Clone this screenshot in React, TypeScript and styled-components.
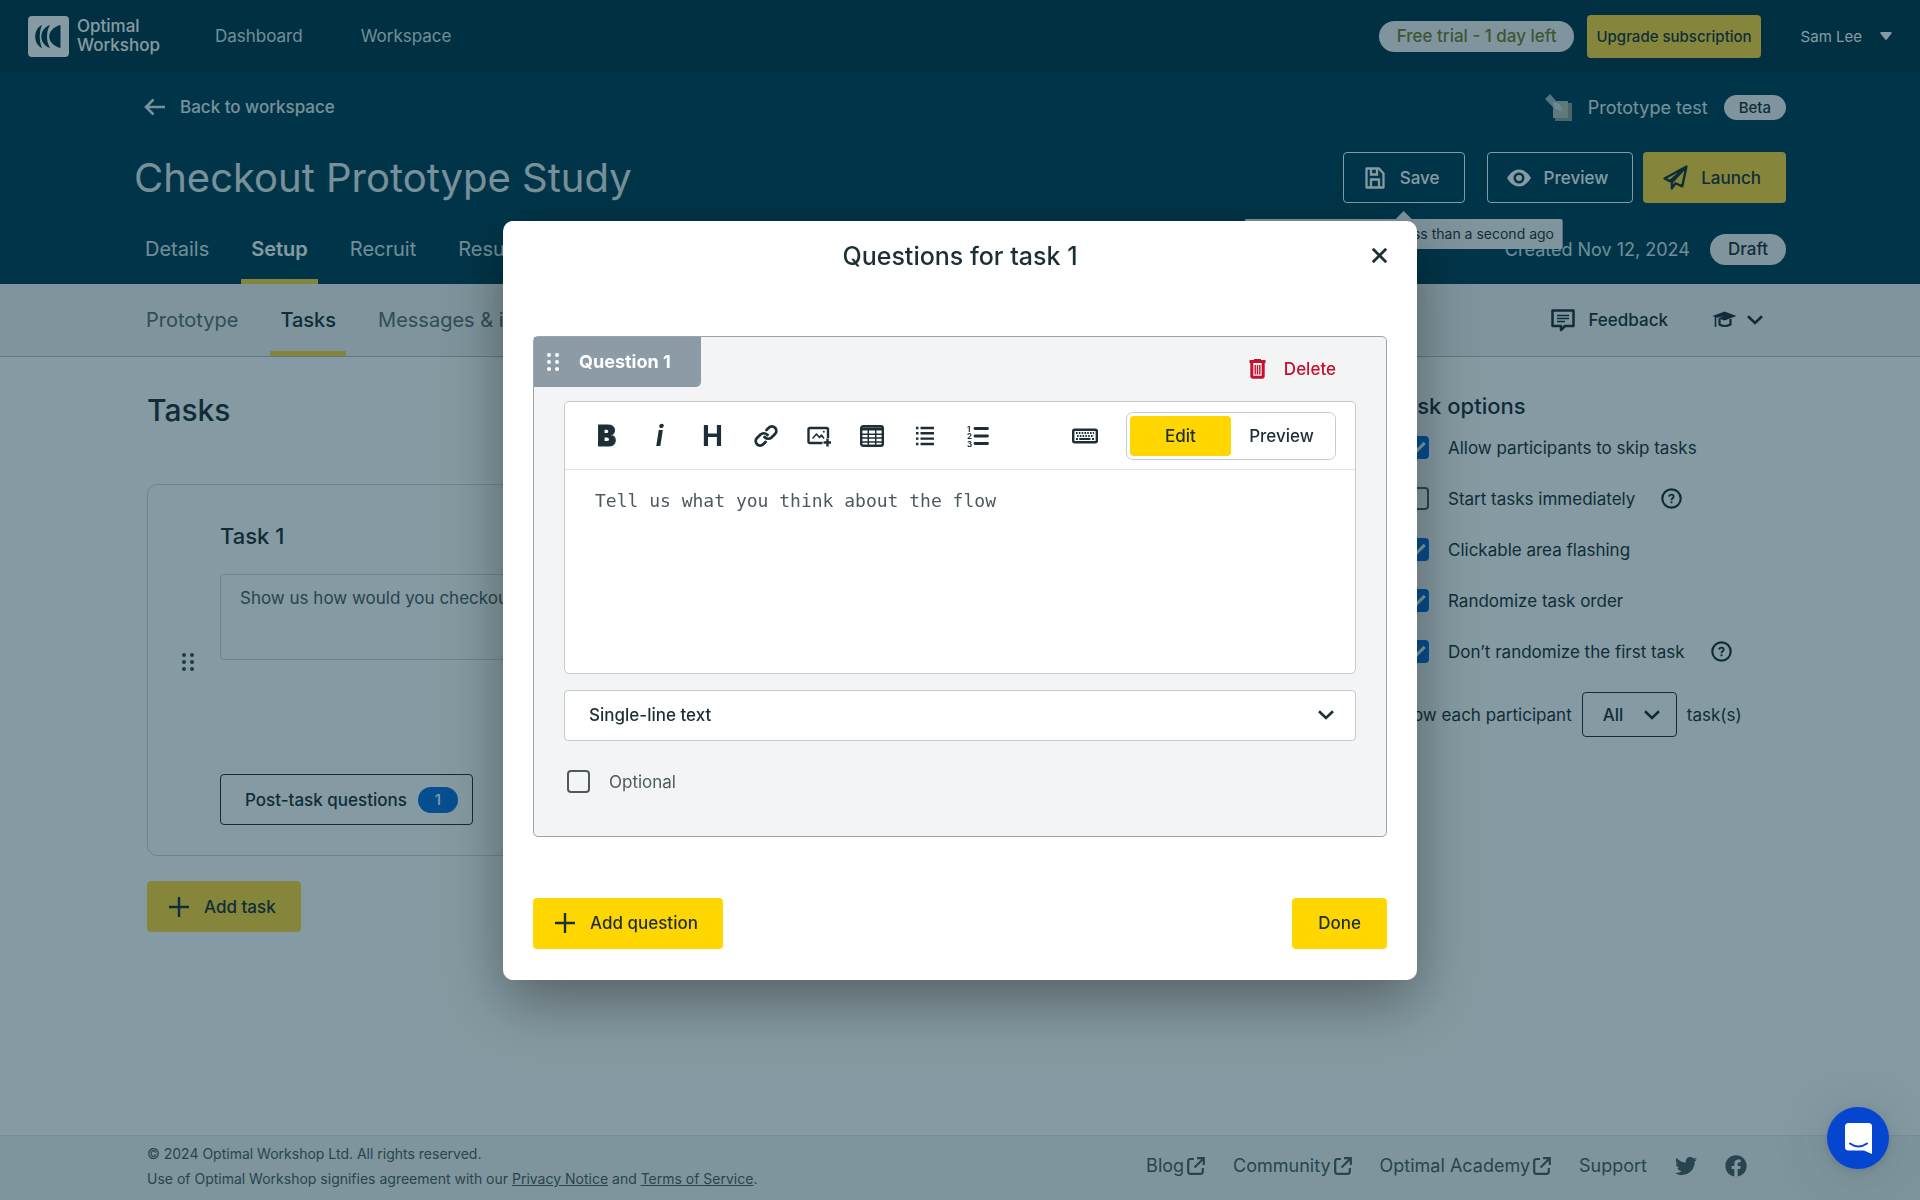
import React, { useState } from "react";
import styled, { createGlobalStyle, css } from "styled-components";
import { FaTwitter, FaFacebook } from "react-icons/fa";

const color = {
  ink: "#1c2f36",
  inkSoft: "#4c5a60",
  navy: "#003e55",
  navyDark: "#003447",
  yellow: "#ffd600",
  yellowSoft: "#ffd83c",
  blue: "#0a70dc",
  line: "#d3d8db",
  surface: "#f3f4f6",
  red: "#c8102e",
};

const GlobalStyle = createGlobalStyle`
  *, *::before, *::after { box-sizing: border-box; }
  body { margin: 0; }
  body, button, input, select, textarea {
    font-family: Inter, "Liberation Sans", sans-serif;
    font-size: 17px;
    color: ${color.ink};
  }
  button { cursor: pointer; }
  h1, h2, h3, p { margin: 0; }
`;

/* ---------- Icons ---------- */

const strokeIcon = (size: number, width = 2) => ({
  width: size,
  height: size,
  viewBox: "0 0 24 24",
  fill: "none",
  stroke: "currentColor",
  strokeWidth: width,
  "aria-hidden": true,
});

const LogoMark = () => (
  <svg width="41" height="41" viewBox="0 0 41 41" aria-hidden="true">
    <rect width="41" height="41" rx="4" fill="#fff" />
    <path d="M14 9C5 13 5 28 14 32C11 26 11 15 14 9Z" fill={color.navyDark} />
    <path d="M22 9C10.500 13 10.500 28 22 32C18 26 18 15 22 9Z" fill={color.navyDark} />
    <path d="M32.500 9V32C17.500 28 17.500 13 32.500 9Z" fill={color.navyDark} />
  </svg>
);

const ArrowLeft = () => (
  <svg {...strokeIcon(24, 2.6)}><path d="M22 12H3M10.500 4.500L3 12L10.500 19.500" /></svg>
);

const CaretDown = () => (
  <svg width="12" height="8" viewBox="0 0 12 8" fill="#fff" aria-hidden="true">
    <path d="M1.500 0H10.500Q12.500 0 11.500 1.500L7 7.200Q6 8.200 5 7.200L0.500 1.500Q-0.500 0 1.500 0Z" />
  </svg>
);

const Chevron = () => (
  <svg width="16" height="10" viewBox="0 0 16 10" fill="none" stroke="currentColor" strokeWidth="2.600" aria-hidden="true">
    <path d="M1 1.200L8 8L15 1.200" />
  </svg>
);

const PrototypeIcon = () => (
  <svg width="27" height="27" viewBox="0 0 27 27" aria-hidden="true">
    <path d="M11 9H27V27H10V12Z" fill="#8f9a9c" />
    <path d="M8 7H23V24H8Z" fill="#b4beb6" />
    <path d="M5 0L12 8Q17 11 16 16Q10 18 7 12L0 5Z" fill="#a3b6c2" />
    <path d="M9 8Q17 9 17 17Q9 17 8 10Z" fill="#d5dfe2" />
  </svg>
);

const SaveIcon = () => (
  <svg {...strokeIcon(24, 2.3)}>
    <path d="M3.500 2.500H16L20.500 7.500V21.500H3.500Z" strokeLinejoin="round" />
    <path d="M8 2.500V8.500H14V2.500M8 21.500V13.500H16V21.500" />
  </svg>
);

const EyeIcon = () => (
  <svg width="24" height="24" viewBox="0 0 24 24" fill="currentColor" fillRule="evenodd" aria-hidden="true">
    <path d="M12 3.500Q19 3.500 24 12Q19 20.500 12 20.500Q5 20.500 0 12Q5 3.500 12 3.500ZM12 6.500A5.500 5.500 0 1 0 12 17.500A5.500 5.500 0 1 0 12 6.500ZM12 9A3 3 0 1 1 12 15A3 3 0 1 1 12 9Z" />
  </svg>
);

const PlaneIcon = () => (
  <svg {...strokeIcon(25, 2.3)} strokeLinejoin="round">
    <path d="M22.500 1.500L1.500 13L6.500 15.500L22.500 1.500L18.500 20.500L12 17.500L8.500 22.500V16.500L22.500 1.500" />
  </svg>
);

const PlusIcon = () => (
  <svg {...strokeIcon(24, 2.4)}><path d="M12 2V22M2 12H22" /></svg>
);

const FeedbackIcon = () => (
  <svg {...strokeIcon(24, 2)} strokeLinejoin="round">
    <path d="M1.500 2.500H22.500V18H14L10 22V18H1.500Z" strokeWidth="2.500" />
    <path d="M6 7.500H18M6 10.500H18M6 13.500H14" strokeWidth="1.400" />
  </svg>
);

const GraduationIcon = () => (
  <svg width="25" height="24" viewBox="0 0 25 24" aria-hidden="true">
    <path d="M0.500 8L12.500 3.500L24.500 8L12.500 12.500L6 10.200L12.500 8L4.800 9.700Z" fill="currentColor" />
    <path d="M3.500 9V19" stroke="currentColor" strokeWidth="1.600" />
    <path d="M7.500 11V16.500Q12.500 19.500 18.500 16.500V11" fill="none" stroke="currentColor" strokeWidth="2.200" />
  </svg>
);

const GripIcon = () => (
  <svg width="12" height="18" viewBox="0 0 12 18" fill="currentColor" aria-hidden="true">
    {[2, 9, 16].map((y) => (
      <g key={y}><circle cx="2" cy={y} r="2" /><circle cx="10" cy={y} r="2" /></g>
    ))}
  </svg>
);

const HelpIcon = () => (
  <svg width="21" height="21" viewBox="0 0 21 21" fill="none" stroke="currentColor" aria-hidden="true">
    <circle cx="10.500" cy="10.500" r="9.200" strokeWidth="2.200" />
    <path d="M8.200 8.600Q8.300 6.600 10.500 6.600Q12.700 6.600 12.700 8.500Q12.700 9.700 11.400 10.400Q10.500 11 10.500 12.200" strokeWidth="1.800" />
    <circle cx="10.500" cy="14.300" r="1.100" fill="currentColor" stroke="none" />
  </svg>
);

const ExternalIcon = () => (
  <svg width="18" height="18" viewBox="0 0 18 18" fill="none" stroke="currentColor" strokeWidth="2.200" aria-hidden="true">
    <path d="M7 2H3.500Q1.200 2 1.200 4.200V14.500Q1.200 16.800 3.500 16.800H13.500Q15.800 16.800 15.800 14.500V11" />
    <path d="M10 1.200H16.800V8M16.500 1.500L7.500 10.500" />
  </svg>
);

const CloseIcon = () => (
  <svg width="15" height="15" viewBox="0 0 15 15" fill="none" stroke="currentColor" strokeWidth="2.800" aria-hidden="true">
    <path d="M0.800 0.800L14.200 14.200M14.200 0.800L0.800 14.200" />
  </svg>
);

const TrashIcon = () => (
  <svg width="17" height="20" viewBox="0 0 17 20" fill="none" stroke="currentColor" aria-hidden="true">
    <path d="M0.500 2.500H16.500M5 1.500H12" strokeWidth="2.800" />
    <path d="M2.800 3V17Q2.800 18.300 4 18.300H13Q14.200 18.300 14.200 17V3" strokeWidth="3" />
    <path d="M6.200 6V15.500M8.500 6V15.500M10.800 6V15.500" strokeWidth="1.400" />
  </svg>
);

const LinkIcon = () => (
  <svg {...strokeIcon(24, 2.8)} strokeLinecap="round">
    <path d="M10.500 13a5 5 0 0 0 7 .5l3.500-3.500a4.300 4.300 0 0 0-6.200-6.200L12.500 6" />
    <path d="M13.500 11a5 5 0 0 0-7-.5L3 14a4.300 4.300 0 0 0 6.200 6.200L11.500 18" />
  </svg>
);

const ImageIcon = () => (
  <svg {...strokeIcon(24, 2.4)} strokeLinejoin="round">
    <path d="M15.500 19H3Q1.500 19 1.500 17.500V5.500Q1.500 4 3 4H19.500Q21 4 21 5.500V14" />
    <path d="M5.500 14.500L9.500 10L12.500 13.500L14.500 11L17 14.500" strokeWidth="1.500" />
    <circle cx="16.800" cy="7.800" r="1" fill="currentColor" stroke="none" />
    <path d="M20.500 14.500V22.500M16.500 18.500H24.500" />
  </svg>
);

const TableIcon = () => (
  <svg width="24" height="22" viewBox="0 0 24 22" fill="none" stroke="currentColor" aria-hidden="true">
    <rect x="1.200" y="1.200" width="21.600" height="19.600" rx="2" strokeWidth="2.400" />
    <path d="M1 4H23" strokeWidth="3" />
    <path d="M8.300 3V20M15.700 3V20M1 9.300H23M1 13H23M1 17H23" strokeWidth="1.500" />
  </svg>
);

const BulletListIcon = () => (
  <svg width="18" height="20" viewBox="0 0 18 20" stroke="currentColor" strokeWidth="2.400" aria-hidden="true">
    {[2, 7.3, 12.600, 18].map((y) => (
      <path key={y} d={`M0 ${y}H2.500M4.500 ${y}H18`} />
    ))}
  </svg>
);

const NumberListIcon = () => (
  <svg width="22" height="24" viewBox="0 0 22 24" aria-hidden="true">
    <path d="M8 4.500H20.500M8 12H20.500M8 19.500H20.500" stroke="currentColor" strokeWidth="2.800" strokeLinecap="round" />
    {[1, 2, 3].map((n) => (
      <text key={n} x="0" y={7.500 * n} fontSize="8" fontWeight="700" fill="currentColor">{n}</text>
    ))}
  </svg>
);

const KeyboardIcon = () => (
  <svg width="26" height="16" viewBox="0 0 26 16" fill="none" stroke="currentColor" aria-hidden="true">
    <rect x="1.200" y="1.700" width="23.600" height="12.600" rx="1.500" strokeWidth="2.400" />
    <path d="M4 5H22M5 8H22" strokeWidth="1.800" strokeDasharray="1.600 1.200" />
    <path d="M4 11H6M7.200 11H18.500M20 11H22" strokeWidth="1.800" />
  </svg>
);

const ChatIcon = () => (
  <svg width="27" height="31" viewBox="0 0 27 31" aria-hidden="true">
    <path d="M3.500 0H23.500Q27 0 27 3.500V31L19 27.500H3.500Q0 27.500 0 24V3.500Q0 0 3.500 0Z" fill="#fff" />
    <path d="M5 20.500Q13.500 26.500 22 20.500" fill="none" stroke="#0546d0" strokeWidth="2" strokeLinecap="round" />
  </svg>
);

/* ---------- Shared controls ---------- */

const Button = styled.button<{ $kind?: "primary" | "soft" | "light" | "dark" }>`
  display: inline-flex;
  align-items: center;
  gap: 13px;
  height: 51px;
  padding: 0 24px 0 19px;
  border: 1px solid transparent;
  border-radius: 4px;
  background: none;
  font-weight: 500;
  white-space: nowrap;
  ${({ $kind }) => $kind === "primary" && css`background: ${color.yellow};`}
  ${({ $kind }) => $kind === "soft" && css`background: ${color.yellowSoft};`}
  ${({ $kind }) => $kind === "light" && css`border-color: #fff; color: #fff;`}
  ${({ $kind }) => $kind === "dark" && css`border-color: ${color.ink}; padding: 0 14px 0 24px; gap: 11px;`}
`;

const PlainButton = styled.button<{ $gap?: number }>`
  display: inline-flex;
  align-items: center;
  gap: ${({ $gap = 0 }) => $gap}px;
  padding: 0;
  border: 0;
  background: none;
  color: inherit;
  font-weight: 500;
`;

const Pill = styled.span<{ $small?: boolean }>`
  display: inline-flex;
  align-items: center;
  height: ${({ $small }) => ($small ? 25 : 31)}px;
  padding: 0 ${({ $small }) => ($small ? 15 : 18)}px;
  border-radius: 16px;
  background: ${color.surface};
  color: ${color.ink};
  font-size: ${({ $small }) => ($small ? 15 : 17)}px;
  font-weight: 500;
`;

const TrialPill = styled(Pill)`
  color: #7b7c2c;
`;

const Checkbox = styled.input.attrs({ type: "checkbox" })`
  appearance: none;
  display: grid;
  place-items: center;
  flex: none;
  width: 23px;
  height: 23px;
  margin: 0;
  border: 2px solid ${color.inkSoft};
  border-radius: 4px;
  &:checked {
    border-color: ${color.blue};
    background: ${color.blue};
  }
  &:checked::after {
    content: "";
    width: 14px;
    height: 8px;
    margin-bottom: 4px;
    border: solid #fff;
    border-width: 0 0 3px 3px;
    transform: rotate(-45deg);
  }
`;

const SelectBox = styled.span<{ $strong?: boolean }>`
  position: relative;
  display: flex;
  select {
    appearance: none;
    width: 100%;
    height: ${({ $strong }) => ($strong ? 45 : 51)}px;
    padding: 0 ${({ $strong }) => ($strong ? "52px 0 20px" : "60px 0 24px")};
    border: 1px solid ${({ $strong }) => ($strong ? color.ink : "#c5cbcf")};
    border-radius: 4px;
    background: ${({ $strong }) => ($strong ? "transparent" : "#fff")};
    font-weight: 500;
  }
  svg {
    position: absolute;
    top: 0;
    bottom: 0;
    right: ${({ $strong }) => ($strong ? 17 : 22)}px;
    margin: auto;
    pointer-events: none;
  }
`;

/* ---------- Page ---------- */

const Page = styled.div`
  display: flex;
  flex-direction: column;
  min-height: 100vh;
  background: #fff;
`;

const TopBar = styled.div`
  display: flex;
  align-items: center;
  height: 72px;
  padding: 0 28px;
  background: ${color.navyDark};
  color: #fff;
`;

const Brand = styled.a`
  display: flex;
  align-items: center;
  gap: 8px;
  margin-right: 55px;
  color: #fff;
  font-weight: 500;
  line-height: 19px;
  text-decoration: none;
`;

const MainNav = styled.nav`
  display: flex;
  gap: 58px;
  flex: 1;
  a {
    color: #dde4e8;
    text-decoration: none;
  }
`;

const UpgradeButton = styled(Button)`
  height: 43px;
  margin: 0 40px 0 13px;
  padding: 0 8px;
  font-size: 15px;
`;

const UserMenu = styled(PlainButton)`
  font-size: 15px;
  font-weight: 400;
`;

const Header = styled.header`
  padding: 20px 134px 0;
  background: ${color.navy};
  color: #fff;
`;

const Row = styled.div<{ $gap?: number }>`
  display: flex;
  align-items: center;
  gap: ${({ $gap = 0 }) => $gap}px;
`;

const BackRow = styled(Row)`
  justify-content: space-between;
  height: 30px;
  padding-left: 9px;
  margin-bottom: 30px;
  color: #e6ebee;
`;

const BackLink = styled.a`
  display: flex;
  align-items: center;
  gap: 13px;
  color: inherit;
  font-weight: 500;
  text-decoration: none;
`;

const TestType = styled.span`
  font-size: 18px;
`;

const TitleRow = styled(Row)`
  justify-content: space-between;
  margin-bottom: 11px;
`;

const StudyTitle = styled.h1`
  font-size: 40px;
  font-weight: 400;
  line-height: 50px;
  color: #e6ebee;
`;

const SaveWrap = styled.div`
  position: relative;
  margin-right: 12px;
`;

const Tooltip = styled.div`
  position: absolute;
  z-index: 1;
  top: 67px;
  left: 50%;
  transform: translateX(-50%);
  padding: 0 9px;
  border-radius: 2px;
  background: ${color.surface};
  color: ${color.ink};
  font-size: 14px;
  line-height: 30px;
  white-space: nowrap;
  &::before {
    content: "";
    position: absolute;
    top: -8px;
    left: 50%;
    margin-left: -9px;
    border: solid transparent;
    border-width: 0 9px 9px;
    border-bottom-color: ${color.surface};
  }
`;

const TabRow = styled(Row)`
  justify-content: space-between;
  height: 70px;
  padding-left: 1px;
`;

const Tabs = styled.nav`
  display: flex;
  align-self: stretch;
  gap: 22px;
`;

const Tab = styled.a<{ $active?: boolean; $dark?: boolean }>`
  display: flex;
  align-items: center;
  padding: 5px 10px 0;
  border-bottom: 5px solid ${({ $active }) => ($active ? color.yellowSoft : "transparent")};
  color: ${({ $active, $dark }) => ($dark ? ($active ? color.ink : "#5c6b73") : $active ? "#fff" : "#dde4e8")};
  font-size: 20px;
  font-weight: ${({ $active, $dark }) => ($active ? ($dark ? 500 : 600) : 400)};
  text-decoration: none;
`;

const Muted = styled.span`
  font-size: 18px;
  color: #dde4e8;
`;

const SubNav = styled.div`
  display: flex;
  align-items: center;
  justify-content: space-between;
  height: 73px;
  padding: 0 157px 0 136px;
  border-bottom: 1px solid #b9c0c5;
  background: ${color.surface};
`;

const Main = styled.main`
  display: grid;
  grid-template-columns: minmax(0, 1fr) 394px;
  gap: 24px;
  flex: 1;
  padding: 33px 134px 60px 147px;
`;

const PageHeading = styled.h2`
  margin-bottom: 54px;
  font-size: 30px;
  font-weight: 500;
  line-height: 40px;
`;

const TaskCard = styled.article`
  display: flex;
  margin-bottom: 25px;
  border: 1px solid ${color.line};
  border-radius: 10px;
`;

const TaskGrip = styled.div`
  display: flex;
  align-items: center;
  justify-content: center;
  width: 72px;
  padding: 0 0 16px 8px;
  color: #38484f;
`;

const TaskBody = styled.div`
  flex: 1;
  padding: 36px 30px 30px 0;
`;

const TaskTitle = styled.h3`
  margin-bottom: 23px;
  font-size: 22px;
  font-weight: 500;
  line-height: 30px;
`;

const TaskText = styled.textarea`
  display: block;
  width: 100%;
  height: 86px;
  margin-bottom: 114px;
  padding: 11px 19px;
  border: 1px solid ${color.line};
  border-radius: 4px;
  background: none;
  color: ${color.inkSoft};
  line-height: 24px;
  resize: none;
`;

const Count = styled.span`
  width: 40px;
  border-radius: 13px;
  background: ${color.blue};
  color: #fff;
  font-size: 15px;
  line-height: 26px;
`;

const OptionsHeading = styled.h3`
  font-size: 22px;
  font-weight: 500;
  line-height: 32px;
`;

const OptionRow = styled.div`
  display: flex;
  align-items: center;
  gap: 26px;
  height: 51px;
  padding-left: 14px;
`;

const CheckLabel = styled.label`
  display: flex;
  align-items: center;
  gap: 19px;
`;

const ParticipantRow = styled(Row)`
  margin-top: 15px;
`;

const Footer = styled.footer`
  display: flex;
  align-items: center;
  justify-content: space-between;
  height: 65px;
  padding: 0 173px 4px 147px;
  border-top: 1px solid #e6eaeb;
  background: #f2f6f5;
  color: ${color.inkSoft};
`;

const Legal = styled.p`
  font-size: 14px;
  line-height: 25px;
  a { color: inherit; }
`;

const FooterLinks = styled.nav`
  display: flex;
  align-items: center;
  gap: 28px;
  font-size: 18px;
  line-height: 24px;
  a {
    display: flex;
    align-items: center;
    gap: 3px;
    color: inherit;
    text-decoration: none;
  }
`;

/* ---------- Dialog ---------- */

const Overlay = styled.div`
  position: fixed;
  inset: 0;
  z-index: 10;
  display: flex;
  align-items: center;
  justify-content: center;
  background: rgba(0, 43, 60, 0.48);
`;

const Dialog = styled.section`
  width: 914px;
  max-width: 100%;
  padding: 0 30px 31px;
  border-radius: 10px;
  background: #fff;
  box-shadow: 0 20px 60px rgba(0, 0, 0, 0.38);
`;

const DialogHeader = styled.div`
  display: grid;
  grid-template-columns: 24px 1fr 24px;
  align-items: center;
  height: 70px;
  margin-bottom: 45px;
`;

const DialogTitle = styled.h2`
  grid-column: 2;
  font-size: 25px;
  font-weight: 500;
  line-height: 30px;
  text-align: center;
`;

const CloseButton = styled(PlainButton)`
  justify-self: end;
`;

const QuestionCard = styled.div`
  padding-bottom: 41px;
  margin-bottom: 61px;
  border: 1px solid #9aa5ab;
  border-radius: 5px;
  background: ${color.surface};
`;

const QuestionHead = styled.div`
  display: flex;
  justify-content: space-between;
  align-items: center;
  height: 64px;
  padding-right: 50px;
  color: ${color.red};
`;

const QuestionTag = styled.div`
  display: flex;
  align-items: center;
  align-self: flex-start;
  gap: 20px;
  height: 50px;
  padding: 0 30px 0 13px;
  border-bottom-right-radius: 5px;
  background: #8c9ba5;
  color: #fff;
  font-size: 18px;
  font-weight: 700;
`;

const QuestionBody = styled.div`
  padding: 0 30px;
`;

const Editor = styled.div`
  margin-bottom: 16px;
  border: 1px solid #c5cbcf;
  border-radius: 5px;
  background: #fff;
`;

const Toolbar = styled.div`
  display: flex;
  align-items: center;
  height: 68px;
  padding: 2px 19px 0 15px;
  border-bottom: 1px solid #dfe3e6;
`;

const ToolButton = styled.button<{ $last?: boolean }>`
  display: flex;
  align-items: center;
  justify-content: center;
  width: 53px;
  height: 40px;
  padding: 0;
  border: 0;
  background: none;
  ${({ $last }) => $last && css`margin: 0 15px 0 auto;`}
`;

const Glyph = styled.span<{ $weight: number; $italic?: boolean }>`
  font-size: 28px;
  font-weight: ${({ $weight }) => $weight};
  font-style: ${({ $italic }) => ($italic ? "italic" : "normal")};
  line-height: 40px;
  ${({ $weight }) => $weight === 900 && css`-webkit-text-stroke: 1px currentColor;`}
`;

const Segmented = styled.div`
  display: flex;
  padding: 3px;
  border: 1px solid #c5cbcf;
  border-radius: 7px;
`;

const Segment = styled.button<{ $active?: boolean }>`
  width: 101px;
  height: 40px;
  padding: 0;
  border: 0;
  border-radius: 4px;
  background: ${({ $active }) => ($active ? color.yellow : "transparent")};
  font-weight: 500;
`;

const EditorText = styled.textarea`
  display: block;
  width: 100%;
  height: 203px;
  padding: 19px 30px;
  border: 0;
  border-radius: 5px;
  background: none;
  color: ${color.inkSoft};
  font-family: "DejaVu Sans Mono", monospace;
  font-size: 18px;
  line-height: 24px;
  resize: none;
`;

const OptionalLabel = styled(CheckLabel)`
  height: 26px;
  margin-top: 28px;
  padding-left: 3px;
  color: ${color.inkSoft};
`;

const DialogFooter = styled(Row)`
  justify-content: space-between;
`;

const DoneButton = styled(Button)`
  padding: 0 25px;
`;

const ChatButton = styled.button`
  position: fixed;
  right: 31px;
  bottom: 31px;
  z-index: 20;
  display: flex;
  align-items: center;
  justify-content: center;
  width: 62px;
  height: 62px;
  padding: 0;
  border: 0;
  border-radius: 50%;
  background: #0546d0;
  box-shadow: 0 2px 8px rgba(0, 0, 0, 0.12), 0 4px 60px rgba(0, 50, 60, 0.16);
`;

const options = [
  { label: "Allow participants to skip tasks", on: true },
  { label: "Start tasks immediately", on: false, help: true },
  { label: "Clickable area flashing", on: true },
  { label: "Randomize task order", on: true },
  { label: "Don’t randomize the first task", on: true, help: true },
];

const tools = [
  { name: "Bold", icon: <Glyph $weight={900}>B</Glyph> },
  { name: "Italic", icon: <Glyph $weight={700} $italic>i</Glyph> },
  { name: "Heading", icon: <Glyph $weight={700}>H</Glyph> },
  { name: "Link", icon: <LinkIcon /> },
  { name: "Image", icon: <ImageIcon /> },
  { name: "Table", icon: <TableIcon /> },
  { name: "Bulleted list", icon: <BulletListIcon /> },
  { name: "Numbered list", icon: <NumberListIcon /> },
];

function StudyHeader() {
  return (
    <Header>
      <BackRow>
        <BackLink href="#workspace"><ArrowLeft />Back to workspace</BackLink>
        <Row $gap={16}>
          <PrototypeIcon />
          <TestType>Prototype test</TestType>
          <Pill $small>Beta</Pill>
        </Row>
      </BackRow>
      <TitleRow>
        <StudyTitle>Checkout Prototype Study</StudyTitle>
        <Row $gap={10}>
          <SaveWrap>
            <Button $kind="light" aria-describedby="save-status"><SaveIcon />Save</Button>
            <Tooltip id="save-status" role="tooltip">Latest changes saved less than a second ago</Tooltip>
          </SaveWrap>
          <Button $kind="light"><EyeIcon />Preview</Button>
          <Button $kind="soft"><PlaneIcon />Launch</Button>
        </Row>
      </TitleRow>
      <TabRow>
        <Tabs>
          <Tab href="#details">Details</Tab>
          <Tab href="#setup" $active>Setup</Tab>
          <Tab href="#recruit">Recruit</Tab>
          <Tab href="#results">Results</Tab>
        </Tabs>
        <Row $gap={20}>
          <Muted>Created Nov 12, 2024</Muted>
          <Pill>Draft</Pill>
        </Row>
      </TabRow>
    </Header>
  );
}

function TaskOptions() {
  return (
    <aside>
      <OptionsHeading>Task options</OptionsHeading>
      {options.map((o) => (
        <OptionRow key={o.label}>
          <CheckLabel><Checkbox defaultChecked={o.on} />{o.label}</CheckLabel>
          {o.help && <PlainButton aria-label={`Help: ${o.label}`}><HelpIcon /></PlainButton>}
        </OptionRow>
      ))}
      <ParticipantRow $gap={10}>
        <label htmlFor="task-count">Show each participant</label>
        <SelectBox $strong>
          <select id="task-count"><option>All</option></select>
          <Chevron />
        </SelectBox>
        <span>task(s)</span>
      </ParticipantRow>
    </aside>
  );
}

function QuestionsDialog() {
  const [mode, setMode] = useState("Edit");
  return (
    <Overlay>
      <Dialog role="dialog" aria-modal="true" aria-labelledby="dialog-title">
        <DialogHeader>
          <DialogTitle id="dialog-title">Questions for task 1</DialogTitle>
          <CloseButton aria-label="Close"><CloseIcon /></CloseButton>
        </DialogHeader>
        <QuestionCard>
          <QuestionHead>
            <QuestionTag><GripIcon />Question 1</QuestionTag>
            <PlainButton $gap={18}><TrashIcon />Delete</PlainButton>
          </QuestionHead>
          <QuestionBody>
            <Editor>
              <Toolbar>
                {tools.map((t) => (
                  <ToolButton key={t.name} aria-label={t.name}>{t.icon}</ToolButton>
                ))}
                <ToolButton $last aria-label="Keyboard shortcuts"><KeyboardIcon /></ToolButton>
                <Segmented>
                  {["Edit", "Preview"].map((m) => (
                    <Segment key={m} $active={m === mode} onClick={() => setMode(m)}>{m}</Segment>
                  ))}
                </Segmented>
              </Toolbar>
              <EditorText aria-label="Question text" defaultValue="Tell us what you think about the flow" />
            </Editor>
            <SelectBox>
              <select aria-label="Question type"><option>Single-line text</option></select>
              <Chevron />
            </SelectBox>
            <OptionalLabel><Checkbox />Optional</OptionalLabel>
          </QuestionBody>
        </QuestionCard>
        <DialogFooter>
          <Button $kind="primary"><PlusIcon />Add question</Button>
          <DoneButton $kind="primary">Done</DoneButton>
        </DialogFooter>
      </Dialog>
    </Overlay>
  );
}

export default function App() {
  return (
    <>
      <GlobalStyle />
      <Page>
        <TopBar>
          <Brand href="#home"><LogoMark /><span>Optimal<br />Workshop</span></Brand>
          <MainNav>
            <a href="#dashboard">Dashboard</a>
            <a href="#workspace">Workspace</a>
          </MainNav>
          <TrialPill>Free trial - 1 day left</TrialPill>
          <UpgradeButton $kind="soft">Upgrade subscription</UpgradeButton>
          <UserMenu $gap={18}>Sam Lee<CaretDown /></UserMenu>
        </TopBar>
        <StudyHeader />
        <SubNav>
          <Tabs>
            <Tab href="#prototype" $dark>Prototype</Tab>
            <Tab href="#tasks" $dark $active>Tasks</Tab>
            <Tab href="#messages" $dark>Messages &amp; instructions</Tab>
          </Tabs>
          <Row $gap={44}>
            <PlainButton $gap={13}><FeedbackIcon />Feedback</PlainButton>
            <PlainButton $gap={10} aria-label="Learning resources"><GraduationIcon /><Chevron /></PlainButton>
          </Row>
        </SubNav>
        <Main>
          <section>
            <PageHeading>Tasks</PageHeading>
            <TaskCard>
              <TaskGrip><GripIcon /></TaskGrip>
              <TaskBody>
                <TaskTitle>Task 1</TaskTitle>
                <TaskText aria-label="Task 1 instructions" defaultValue="Show us how would you checkout" />
                <Button $kind="dark">Post-task questions<Count>1</Count></Button>
              </TaskBody>
            </TaskCard>
            <Button $kind="soft"><PlusIcon />Add task</Button>
          </section>
          <TaskOptions />
        </Main>
        <Footer>
          <Legal>
            © 2024 Optimal Workshop Ltd. All rights reserved.<br />
            Use of Optimal Workshop signifies agreement with our <a href="#privacy">Privacy Notice</a> and <a href="#terms">Terms of Service</a>.
          </Legal>
          <FooterLinks>
            <a href="#blog">Blog<ExternalIcon /></a>
            <a href="#community">Community<ExternalIcon /></a>
            <a href="#academy">Optimal Academy<ExternalIcon /></a>
            <a href="#support">Support</a>
            <a href="#twitter" aria-label="Twitter"><FaTwitter size={22} /></a>
            <a href="#facebook" aria-label="Facebook"><FaFacebook size={22} /></a>
          </FooterLinks>
        </Footer>
      </Page>
      <QuestionsDialog />
      <ChatButton aria-label="Open chat"><ChatIcon /></ChatButton>
    </>
  );
}
